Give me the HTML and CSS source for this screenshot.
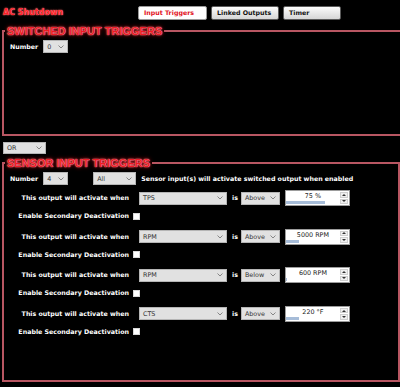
FILE: index.html
```html
<!DOCTYPE html>
<html>
<head>
<meta charset="utf-8">
<link rel="stylesheet" href="styles.css">
</head>
<body>
<div class="app">
  <header class="top">
    <div class="title">AC Shutdown</div>
    <nav class="tabs">
      <div class="tab active w1">Input Triggers</div>
      <div class="tab w2">Linked Outputs</div>
      <div class="tab w3">Timer</div>
    </nav>
  </header>

  <fieldset class="group switched">
    <legend>SWITCHED INPUT TRIGGERS</legend>
    <div class="sw-body">
      <div class="num-row">
        <span class="lbl">Number</span>
        <div class="sel s-num"><span>0</span><svg class="chev" width="6" height="4" viewBox="0 0 6 4"><polyline points="0.5,0.5 3,3 5.5,0.5" fill="none" stroke="#7a7a7a" stroke-width="0.9"/></svg></div>
      </div>
    </div>
  </fieldset>

  <div class="logic">
    <div class="sel s-or"><span>OR</span><svg class="chev" width="6" height="4" viewBox="0 0 6 4"><polyline points="0.5,0.5 3,3 5.5,0.5" fill="none" stroke="#7a7a7a" stroke-width="0.9"/></svg></div>
  </div>

  <fieldset class="group sensor">
    <legend>SENSOR INPUT TRIGGERS</legend>
    <div class="se-body">
      <div class="num-row">
        <span class="lbl">Number</span>
        <div class="sel s-num"><span>4</span><svg class="chev" width="6" height="4" viewBox="0 0 6 4"><polyline points="0.5,0.5 3,3 5.5,0.5" fill="none" stroke="#7a7a7a" stroke-width="0.9"/></svg></div>
        <div class="sel s-all"><span>All</span><svg class="chev" width="6" height="4" viewBox="0 0 6 4"><polyline points="0.5,0.5 3,3 5.5,0.5" fill="none" stroke="#7a7a7a" stroke-width="0.9"/></svg></div>
        <span class="lbl">Sensor input(s) will activate switched output when enabled</span>
      </div>

      <div class="trigs">
        <div class="trig">
          <div class="trow">
            <span class="tl">This output will activate when</span>
            <div class="sel s-src"><span>TPS</span><svg class="chev" width="6" height="4" viewBox="0 0 6 4"><polyline points="0.5,0.5 3,3 5.5,0.5" fill="none" stroke="#7a7a7a" stroke-width="0.9"/></svg></div>
            <span class="is">is</span>
            <div class="sel s-cmp"><span>Above</span><svg class="chev" width="6" height="4" viewBox="0 0 6 4"><polyline points="0.5,0.5 3,3 5.5,0.5" fill="none" stroke="#7a7a7a" stroke-width="0.9"/></svg></div>
            <div class="spin">
              <div class="spin-val"><span class="spin-txt">75 %</span><div class="bar" style="width:39px"></div></div>
              <div class="spin-btns">
                <div class="arrow"><svg width="4" height="2" viewBox="0 0 4 2"><polygon points="0,2 2,0 4,2" fill="#333"/></svg></div>
                <div class="arrow"><svg width="4" height="2" viewBox="0 0 4 2"><polygon points="0,0 4,0 2,2" fill="#333"/></svg></div>
              </div>
            </div>
          </div>
          <div class="erow"><span class="tl">Enable Secondary Deactivation</span><span class="chk"></span></div>
        </div>

        <div class="trig">
          <div class="trow">
            <span class="tl">This output will activate when</span>
            <div class="sel s-src"><span>RPM</span><svg class="chev" width="6" height="4" viewBox="0 0 6 4"><polyline points="0.5,0.5 3,3 5.5,0.5" fill="none" stroke="#7a7a7a" stroke-width="0.9"/></svg></div>
            <span class="is">is</span>
            <div class="sel s-cmp"><span>Above</span><svg class="chev" width="6" height="4" viewBox="0 0 6 4"><polyline points="0.5,0.5 3,3 5.5,0.5" fill="none" stroke="#7a7a7a" stroke-width="0.9"/></svg></div>
            <div class="spin">
              <div class="spin-val"><span class="spin-txt">5000 RPM</span><div class="bar" style="width:13px"></div></div>
              <div class="spin-btns">
                <div class="arrow"><svg width="4" height="2" viewBox="0 0 4 2"><polygon points="0,2 2,0 4,2" fill="#333"/></svg></div>
                <div class="arrow"><svg width="4" height="2" viewBox="0 0 4 2"><polygon points="0,0 4,0 2,2" fill="#333"/></svg></div>
              </div>
            </div>
          </div>
          <div class="erow"><span class="tl">Enable Secondary Deactivation</span><span class="chk"></span></div>
        </div>

        <div class="trig">
          <div class="trow">
            <span class="tl">This output will activate when</span>
            <div class="sel s-src"><span>RPM</span><svg class="chev" width="6" height="4" viewBox="0 0 6 4"><polyline points="0.5,0.5 3,3 5.5,0.5" fill="none" stroke="#7a7a7a" stroke-width="0.9"/></svg></div>
            <span class="is">is</span>
            <div class="sel s-cmp"><span>Below</span><svg class="chev" width="6" height="4" viewBox="0 0 6 4"><polyline points="0.5,0.5 3,3 5.5,0.5" fill="none" stroke="#7a7a7a" stroke-width="0.9"/></svg></div>
            <div class="spin">
              <div class="spin-val"><span class="spin-txt">600 RPM</span><div class="bar" style="width:1px"></div></div>
              <div class="spin-btns">
                <div class="arrow"><svg width="4" height="2" viewBox="0 0 4 2"><polygon points="0,2 2,0 4,2" fill="#333"/></svg></div>
                <div class="arrow"><svg width="4" height="2" viewBox="0 0 4 2"><polygon points="0,0 4,0 2,2" fill="#333"/></svg></div>
              </div>
            </div>
          </div>
          <div class="erow"><span class="tl">Enable Secondary Deactivation</span><span class="chk"></span></div>
        </div>

        <div class="trig">
          <div class="trow">
            <span class="tl">This output will activate when</span>
            <div class="sel s-src"><span>CTS</span><svg class="chev" width="6" height="4" viewBox="0 0 6 4"><polyline points="0.5,0.5 3,3 5.5,0.5" fill="none" stroke="#7a7a7a" stroke-width="0.9"/></svg></div>
            <span class="is">is</span>
            <div class="sel s-cmp"><span>Above</span><svg class="chev" width="6" height="4" viewBox="0 0 6 4"><polyline points="0.5,0.5 3,3 5.5,0.5" fill="none" stroke="#7a7a7a" stroke-width="0.9"/></svg></div>
            <div class="spin">
              <div class="spin-val"><span class="spin-txt">220 °F</span><div class="bar" style="width:13px"></div></div>
              <div class="spin-btns">
                <div class="arrow"><svg width="4" height="2" viewBox="0 0 4 2"><polygon points="0,2 2,0 4,2" fill="#333"/></svg></div>
                <div class="arrow"><svg width="4" height="2" viewBox="0 0 4 2"><polygon points="0,0 4,0 2,2" fill="#333"/></svg></div>
              </div>
            </div>
          </div>
          <div class="erow"><span class="tl">Enable Secondary Deactivation</span><span class="chk"></span></div>
        </div>
      </div>
    </div>
  </fieldset>
</div>
</body>
</html>
```

FILE: styles.css
```css
html, body {
  margin: 0;
  padding: 0;
  background: #000;
}
body {
  width: 400px;
  height: 387px;
  overflow: hidden;
  font-family: "DejaVu Sans", sans-serif;
}
.app {
  width: 400px;
}

/* header */
.top {
  display: flex;
  align-items: center;
  height: 14px;
  padding-top: 6px;
}
.title {
  margin-left: 3px;
  width: 135px;
  flex: none;
  font: bold 8px/10px "DejaVu Sans", sans-serif;
  color: #ff1e26;
  text-shadow: 0 0 1px #ffd0d0, 0 0 2px #ff3a3a;
}
.tabs {
  display: flex;
  gap: 4px;
}
.tab {
  box-sizing: border-box;
  height: 14px;
  border: 1px solid #5a5a5a;
  border-radius: 2px;
  background: linear-gradient(#fbfbfb, #d6d6d6);
  font: bold 6.3px/12px "DejaVu Sans", sans-serif;
  color: #111;
  padding-left: 5px;
  white-space: nowrap;
}
.tab.active {
  background: #fff;
  color: #e2101c;
  border-color: #9a9a9a;
}
.w1 { width: 69px; }
.w2 { width: 68px; }
.w3 { width: 58px; }

/* group boxes */
fieldset.group {
  box-sizing: border-box;
  margin: 0 0 0 2px;
  padding: 0;
  min-width: 0;
  border: 2px solid #b85662;
}
fieldset.group legend {
  margin-left: 1px;
  padding: 0 2px;
  font: bold 11px/12px "Liberation Sans", Arial, sans-serif;
  color: #ee1a24;
  text-shadow: 0 0 1px #ffe0e0, 0 0 2px #ff5060, 0 0 4px #e00010;
  white-space: nowrap;
}
.switched {
  width: 398px;
  border-right: none !important;
  margin-top: 5px !important;
}
.sw-body {
  height: 94px;
}
.sensor {
  width: 398px;
  margin-top: 3px !important;
}
.se-body {
  height: 208px;
}

.num-row {
  display: flex;
  align-items: center;
  gap: 5px;
  height: 13px;
  margin-top: 3px;
  padding-left: 6px;
}
.lbl {
  font: bold 6.3px/8px "DejaVu Sans", sans-serif;
  color: #fff;
  white-space: nowrap;
}

/* select boxes */
.sel {
  box-sizing: border-box;
  flex: none;
  height: 13px;
  display: flex;
  align-items: center;
  justify-content: space-between;
  padding: 0 3px 0 3px;
  background: #e1e1e1;
  border: 1px solid #b5b5b5;
  font: 6.4px/10px "DejaVu Sans", sans-serif;
  color: #333;
  white-space: nowrap;
}
.chev {
  display: block;
  flex: none;
}
.s-num { width: 25px; }
.s-all { width: 43px; margin-left: 20px; }
.s-or { width: 43px; height: 12px; }
.s-src { width: 88px; margin-left: 10px; }
.s-cmp { width: 39px; margin-left: 3px; }

.logic {
  margin: 6px 0 0 3px;
  display: flex;
}

/* triggers */
.trigs {
  display: flex;
  flex-direction: column;
  gap: 8.6px;
  margin-top: 5px;
}
.trow {
  display: flex;
  align-items: center;
  height: 16px;
}
.tl {
  width: 125px;
  flex: none;
  text-align: right;
  font: bold 6.3px/8px "DejaVu Sans", sans-serif;
  color: #fff;
  white-space: nowrap;
}
.is {
  margin-left: 5px;
  font: bold 6.3px/8px "DejaVu Sans", sans-serif;
  color: #fff;
}
.erow {
  display: flex;
  align-items: center;
  gap: 4px;
  height: 8px;
  margin-top: 6px;
}
.chk {
  width: 7px;
  height: 7px;
  background: #fff;
  box-sizing: border-box;
  border: 1px solid #d8d8d8;
}

/* spin box */
.spin {
  box-sizing: border-box;
  margin-left: 5px;
  width: 65px;
  height: 16px;
  flex: none;
  display: flex;
  background: #fff;
  border: 1px solid #9c9c9c;
}
.spin-val {
  flex: 1;
  display: flex;
  flex-direction: column;
  justify-content: space-between;
  padding: 1px 0 1px 0;
}
.spin-txt {
  text-align: center;
  font: 6.4px/8px "DejaVu Sans", sans-serif;
  color: #222;
  white-space: nowrap;
}
.bar {
  height: 3px;
  background: #a6bcd8;
}
.spin-btns {
  width: 9px;
  flex: none;
  display: flex;
  flex-direction: column;
  gap: 1px;
  padding: 1px 1px 1px 0;
  box-sizing: border-box;
}
.arrow {
  flex: 1;
  display: flex;
  align-items: center;
  justify-content: center;
  background: #efefef;
  border: 1px solid #cfcfcf;
}
.arrow svg {
  display: block;
}
```
